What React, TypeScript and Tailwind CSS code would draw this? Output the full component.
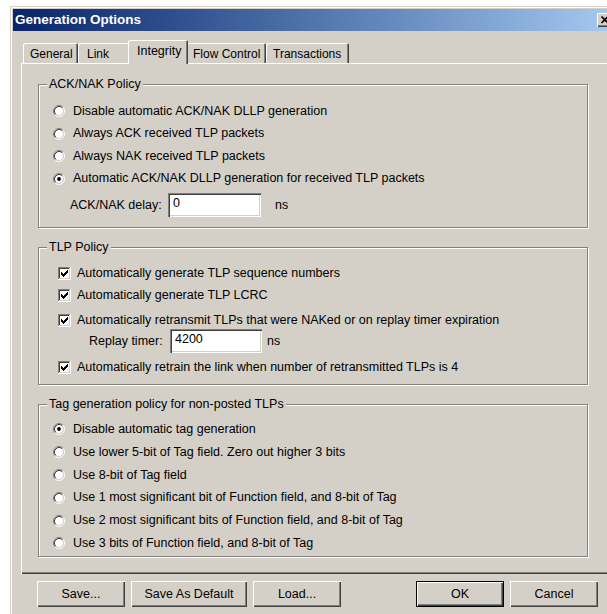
import React from "react";

// Win2000-style bevels
const raised =
  "shadow-[inset_1px_1px_#fff,inset_-1px_-1px_#404040,inset_-2px_-2px_#808080]";
const sunken =
  "shadow-[inset_1px_1px_#808080,inset_2px_2px_#404040,inset_-1px_-1px_#fff,inset_-2px_-2px_#d4d0c8]";

function Radio({ checked }: { checked?: boolean }) {
  return (
    <svg width="12" height="12" viewBox="0 0 12 12" className="shrink-0">
      <circle cx="6" cy="6" r="4.2" fill="#fff" />
      <path d="M2.11 9.89A5.5 5.5 0 0 1 9.89 2.11" fill="none" stroke="#808080" />
      <path d="M9.89 2.11A5.5 5.5 0 0 1 2.11 9.89" fill="none" stroke="#fff" />
      <path d="M2.82 9.18A4.5 4.5 0 0 1 9.18 2.82" fill="none" stroke="#404040" />
      <path d="M9.18 2.82A4.5 4.5 0 0 1 2.82 9.18" fill="none" stroke="#d4d0c8" />
      {checked && <circle cx="6" cy="6" r="1.9" fill="#000" />}
    </svg>
  );
}

function Checkbox({ checked }: { checked?: boolean }) {
  const tick = [5, 6, 7, 6, 5, 4, 3];
  return (
    <svg width="13" height="13" viewBox="0 0 13 13" shapeRendering="crispEdges" className="shrink-0">
      <rect x="0" y="0" width="13" height="13" fill="#fff" />
      <rect x="0" y="0" width="12" height="1" fill="#808080" />
      <rect x="0" y="0" width="1" height="12" fill="#808080" />
      <rect x="1" y="1" width="10" height="1" fill="#404040" />
      <rect x="1" y="1" width="1" height="10" fill="#404040" />
      <rect x="1" y="11" width="11" height="1" fill="#d4d0c8" />
      <rect x="11" y="1" width="1" height="11" fill="#d4d0c8" />
      {checked &&
        tick.map((y, i) => <rect key={i} x={3 + i} y={y} width="1" height="3" fill="#000" />)}
    </svg>
  );
}

function RadioRow({ label, checked, h = "h-[22.5px]" }: { label: string; checked?: boolean; h?: string }) {
  return (
    <div className={`flex items-center pl-[14px] ${h}`}>
      <Radio checked={checked} />
      <span className="ml-[8px]">{label}</span>
    </div>
  );
}

function CheckRow({ label, className = "" }: { label: string; className?: string }) {
  return (
    <div className={`flex items-center pl-[19px] h-[22px] ${className}`}>
      <Checkbox checked />
      <span className="ml-[6px]">{label}</span>
    </div>
  );
}

function GroupBox({
  title,
  className,
  children,
}: {
  title: string;
  className: string;
  children: React.ReactNode;
}) {
  return (
    <div
      className={`relative w-[550px] border border-[#808080] shadow-[inset_1px_1px_#fff,1px_1px_#fff] ${className}`}
    >
      <span className="absolute -top-[8px] left-[8px] px-[2px] bg-[#d4d0c8] leading-[14px]">{title}</span>
      {children}
    </div>
  );
}

function Field({ value, w }: { value: string; w: string }) {
  return <div className={`${w} h-[24px] bg-white ${sunken} pl-[5px] pt-[3px] leading-[14px]`}>{value}</div>;
}

const tabs = [
  { label: "General", w: "w-[55px]", pl: "pl-[7px]" },
  { label: "Link", w: "w-[52px]", pl: "pl-[9px]" },
  { label: "Integrity", w: "w-[60px]", pl: "pl-[9px]", active: true },
  { label: "Flow Control", w: "w-[80px]", pl: "pl-[7px]" },
  { label: "Transactions", w: "w-[83px]", pl: "pl-[7px]" },
];

const tagOptions = [
  "Disable automatic tag generation",
  "Use lower 5-bit of Tag field. Zero out higher 3 bits",
  "Use 8-bit of Tag field",
  "Use 1 most significant bit of Function field, and 8-bit of Tag",
  "Use 2 most significant bits of Function field, and 8-bit of Tag",
  "Use 3 bits of Function field, and 8-bit of Tag",
];

export default function App() {
  return (
    <div className="w-[607px] h-[614px] overflow-hidden bg-white pl-[10px] pt-[6px] font-['Liberation_Sans',Arial,sans-serif] text-[12.5px] text-black">
      <div className="w-[608px] h-[620px] bg-[#d4d0c8] p-[3px] shadow-[inset_1px_1px_#d4d0c8,inset_2px_2px_#fff]">
        {/* caption */}
        <div className="flex items-center h-[22px] bg-gradient-to-r from-[#0a246a] to-[#a6caf0] pl-[2px] pr-[2px]">
          <span className="text-white font-bold text-[13.5px] leading-none">Generation Options</span>
          <div className={`ml-auto w-[16px] h-[14px] bg-[#d4d0c8] ${raised}`}>
            <svg width="16" height="14" viewBox="0 0 16 14">
              <path d="M4.5 3.5L11 10M11 3.5L4.5 10" stroke="#000" strokeWidth="1.7" />
            </svg>
          </div>
        </div>

        {/* tab strip */}
        <div className="flex items-start h-[23px] mt-[9px] ml-[10px]">
          {tabs.map((t) =>
            t.active ? (
              <div
                key={t.label}
                className={`relative z-10 -mx-[2px] h-[24px] ${t.w} ${t.pl} pt-[4px] bg-[#d4d0c8] rounded-t-[2px] shadow-[inset_1px_1px_#fff,inset_-1px_0_#404040,inset_-2px_0_#808080] leading-[14px]`}
              >
                {t.label}
              </div>
            ) : (
              <div
                key={t.label}
                className={`mt-[3px] h-[20px] ${t.w} ${t.pl} pt-[4px] text-[12px] rounded-t-[2px] shadow-[inset_1px_1px_#fff,inset_-1px_0_#404040,inset_-2px_0_#808080] leading-[14px] whitespace-nowrap`}
              >
                {t.label}
              </div>
            )
          )}
        </div>

        {/* tab page */}
        <div className={`ml-[8px] w-[588px] h-[511px] pt-[21px] pl-[17px] ${raised}`}>
          <GroupBox title="ACK/NAK Policy" className="h-[144px] pt-[15px]">
            <RadioRow label="Disable automatic ACK/NAK DLLP generation" />
            <RadioRow label="Always ACK received TLP packets" />
            <RadioRow label="Always NAK received TLP packets" />
            <RadioRow label="Automatic ACK/NAK DLLP generation for received TLP packets" checked />
            <div className="flex items-center mt-[3px] h-[24px] pl-[31px]">
              <span className="w-[98px]">ACK/NAK delay:</span>
              <Field value="0" w="w-[93px]" />
              <span className="ml-[14px]">ns</span>
            </div>
          </GroupBox>

          <GroupBox title="TLP Policy" className="mt-[19px] h-[138px] pt-[14px]">
            <CheckRow label="Automatically generate TLP sequence numbers" />
            <CheckRow label="Automatically generate TLP LCRC" />
            <CheckRow
              label="Automatically retransmit TLPs that were NAKed or on replay timer expiration"
              className="mt-[3px]"
            />
            <div className="flex items-center -mt-[2px] h-[24px] pl-[50px]">
              <span className="w-[81px]">Replay timer:</span>
              <Field value="4200" w="w-[92px]" />
              <span className="ml-[5px]">ns</span>
            </div>
            <CheckRow
              label="Automatically retrain the link when number of retransmitted TLPs is 4"
              className="mt-[3px]"
            />
          </GroupBox>

          <GroupBox title="Tag generation policy for non-posted TLPs" className="mt-[19px] h-[153px] pt-[13px]">
            {tagOptions.map((o, i) => (
              <RadioRow key={o} label={o} checked={i === 0} h="h-[22.8px]" />
            ))}
          </GroupBox>
        </div>

        {/* dialog buttons */}
        <div className="flex mt-[7px] ml-[24px]">
          <button className={`w-[88px] h-[26px] ${raised}`}>Save...</button>
          <button className={`ml-[6px] w-[116px] h-[26px] ${raised}`}>Save As Default</button>
          <button className={`ml-[6px] w-[88px] h-[26px] ${raised}`}>Load...</button>
          <button className={`ml-[75px] w-[88px] h-[26px] border border-black ${raised}`}>OK</button>
          <button className={`ml-[6px] w-[88px] h-[26px] ${raised}`}>Cancel</button>
        </div>
      </div>
    </div>
  );
}
